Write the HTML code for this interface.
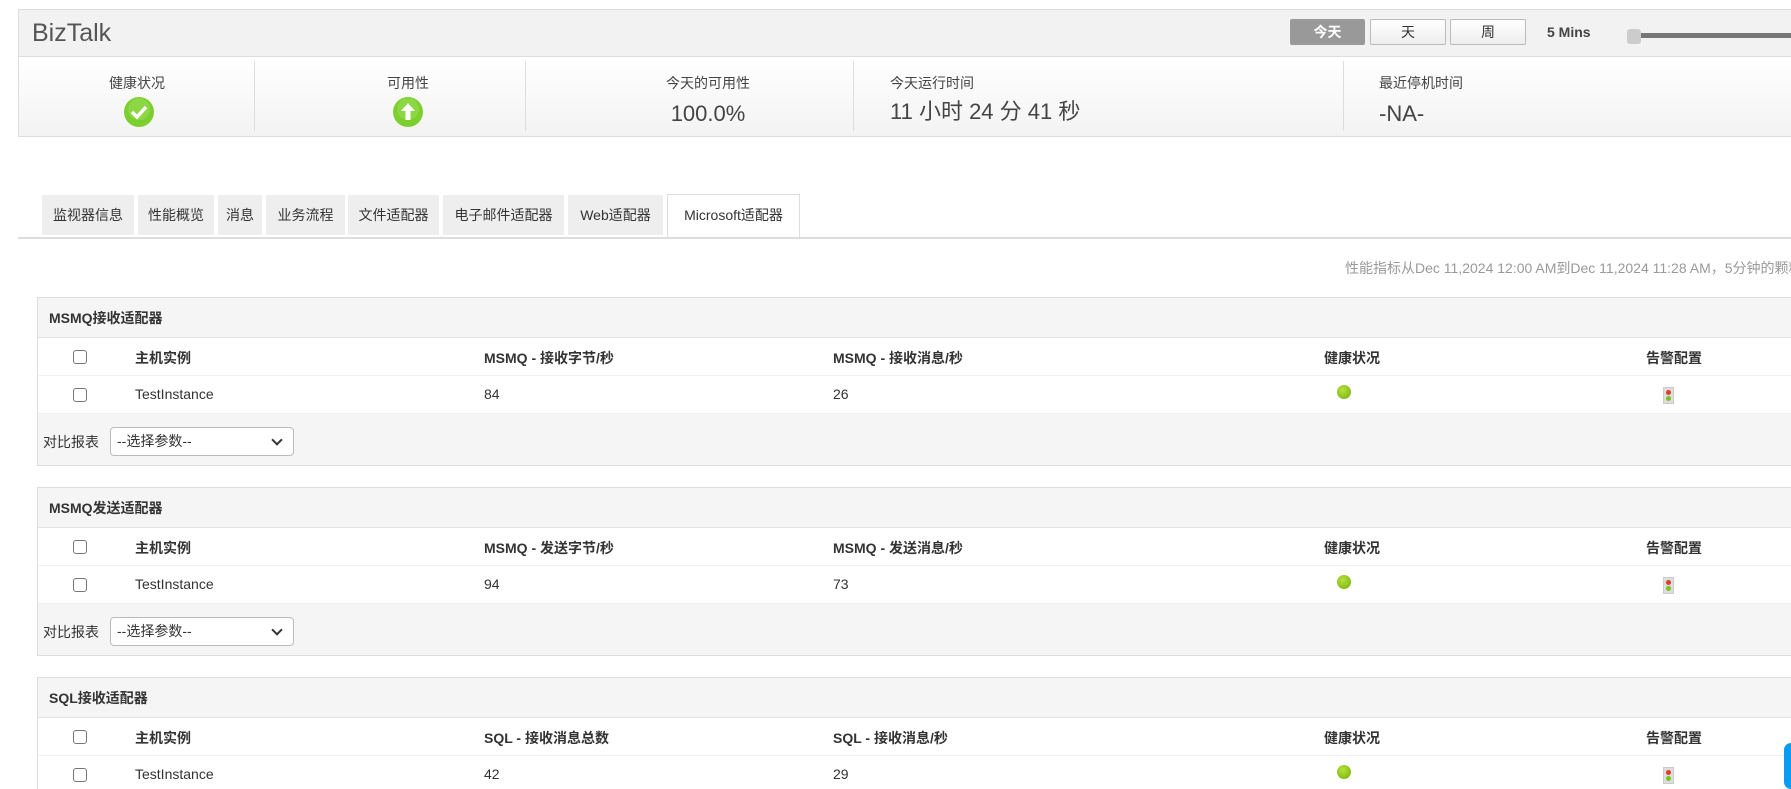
<!DOCTYPE html>
<html><head><meta charset="utf-8"><style>
*{box-sizing:border-box;margin:0;padding:0}
html,body{width:1791px;height:789px;overflow:hidden}
body{background:#fff;font-family:"Liberation Sans","Noto Sans CJK SC",sans-serif;color:#333;position:relative}
.abs{position:absolute}
.hdr{left:18px;top:9px;width:1773px;height:128px;border:1px solid #ddd;border-right:none;background:#f2f2f2}
.stats{left:19px;top:56px;width:1772px;height:80px;border-top:1px solid #ddd;background:linear-gradient(#fff,#f3f3f3)}
.div{position:absolute;top:4px;height:70px;width:1px;background:#ddd}
.lbl{position:absolute;top:17px;font-size:14px;color:#444;white-space:nowrap;line-height:18px}
.val{position:absolute;top:44px;font-size:22px;color:#444;white-space:nowrap;line-height:26px}
.btn{top:19px;height:26px;border:1px solid #bbb;background:linear-gradient(#fff,#eee);font-size:14px;text-align:center;line-height:24px;color:#333;border-radius:2px}
.tab{top:195px;height:40px;background:#eee;font-size:14px;line-height:40px;text-align:center;color:#333}
.box{left:37px;width:1754px;border:1px solid #ddd;border-right:none;background:#f5f5f5}
.box .t{height:40px;line-height:40px;padding-left:11px;font-size:14px;font-weight:bold;color:#333;border-bottom:1px solid #e3e3e3}
.row{position:relative;height:38px;background:#fff;border-bottom:1px solid #f0f0f0;font-size:14px}
.row span{position:absolute;top:10px;white-space:nowrap}
.hd span{font-weight:bold;color:#333}
.cb{position:absolute;left:35px;top:12px;width:14px;height:14px;border:1px solid #777;border-radius:3px;background:#fff}
.dot{position:absolute;width:14px;height:14px;border-radius:50%;background:radial-gradient(circle at 40% 35%,#b6e23a,#6fae0a);top:9px;left:1299px}
.tl{position:absolute;left:1625px;top:11px;width:11px;height:17px;background:#ddd;border:1px solid #ccc}
.tl:before{content:"";position:absolute;left:2px;top:2px;width:5px;height:5px;border-radius:50%;background:#e03c2c}
.tl:after{content:"";position:absolute;left:2px;top:8px;width:5px;height:5px;border-radius:50%;background:#7cc21e}
.foot{position:relative;height:51px;font-size:14px}
.foot .l{position:absolute;left:5px;top:18px}
.sel{position:absolute;left:72px;top:13px;width:184px;height:29px;border:1px solid #bbb;border-radius:4px;background:#fff;font-size:14px;line-height:27px;padding-left:6px}
.sel:after{content:"";position:absolute;right:12px;top:8px;width:6px;height:6px;border-right:2px solid #333;border-bottom:2px solid #333;transform:rotate(45deg)}
</style></head><body>
<div class="abs hdr"></div>
<div class="abs" style="left:32px;top:19px;font-size:25px;color:#555">BizTalk</div>
<div class="abs btn" style="left:1290px;width:75px;background:#999;border-color:#999;color:#fff;font-weight:bold">今天</div>
<div class="abs btn" style="left:1370px;width:76px">天</div>
<div class="abs btn" style="left:1450px;width:76px">周</div>
<div class="abs" style="left:1547px;top:24px;font-size:14px;font-weight:bold;color:#444">5 Mins</div>
<div class="abs" style="left:1630px;top:33px;width:161px;height:5px;background:#777;border-radius:2px 0 0 2px"></div>
<div class="abs" style="left:1627px;top:29px;width:14px;height:15px;background:#ccc;border-radius:3px"></div>
<div class="abs stats">
 <div class="div" style="left:235px"></div><div class="div" style="left:506px"></div><div class="div" style="left:834px"></div><div class="div" style="left:1324px"></div>
 <div class="lbl" style="left:118px;width:0;display:flex;justify-content:center"><span>健康状况</span></div>
 <div class="lbl" style="left:389px;width:0;display:flex;justify-content:center"><span>可用性</span></div>
 <div class="lbl" style="left:689px;width:0;display:flex;justify-content:center"><span>今天的可用性</span></div>
 <div class="val" style="left:689px;width:0;display:flex;justify-content:center"><span>100.0%</span></div>
 <div class="lbl" style="left:871px">今天运行时间</div>
 <div class="val" style="left:871px;top:42px">11 小时 24 分 41 秒</div>
 <div class="lbl" style="left:1360px">最近停机时间</div>
 <div class="val" style="left:1360px">-NA-</div>
</div>
<svg class="abs" style="left:123px;top:96px" width="32" height="32"><circle cx="16" cy="16" r="15" fill="#7ccf2e"/><circle cx="16" cy="13" r="11" fill="#9ee05a" opacity=".5"/><path d="M9 16l5 5 9-10" stroke="#fff" stroke-width="3.5" fill="none"/></svg>
<svg class="abs" style="left:392px;top:96px" width="32" height="32"><circle cx="16" cy="16" r="15" fill="#7ccf2e"/><circle cx="16" cy="13" r="11" fill="#9ee05a" opacity=".5"/><path d="M16 7l-7 8h4.5v9h5v-9H23z" fill="#fff"/></svg>
<div class="abs tab" style="left:42px;width:92px">监视器信息</div>
<div class="abs tab" style="left:138px;width:76px">性能概览</div>
<div class="abs tab" style="left:218px;width:44px">消息</div>
<div class="abs tab" style="left:266px;width:79px">业务流程</div>
<div class="abs tab" style="left:348px;width:91px">文件适配器</div>
<div class="abs tab" style="left:443px;width:121px">电子邮件适配器</div>
<div class="abs tab" style="left:568px;width:95px">Web适配器</div>
<div class="abs tab" style="left:667px;width:133px;background:#fff;border:1px solid #ddd;border-bottom:none;height:44px;top:194px">Microsoft适配器</div>
<div class="abs" style="left:18px;top:237px;width:1773px;height:2px;background:#ddd"></div>
<div class="abs" style="left:1345px;top:258px;font-size:14px;color:#999;white-space:nowrap">性能指标从Dec 11,2024 12:00 AM到Dec 11,2024 11:28 AM，5分钟的颗粒度</div>

<div class="abs box" style="top:297px">
 <div class="t">MSMQ接收适配器</div>
 <div class="row hd"><i class="cb"></i><span style="left:97px">主机实例</span><span style="left:446px">MSMQ - 接收字节/秒</span><span style="left:795px">MSMQ - 接收消息/秒</span><span style="left:1286px">健康状况</span><span style="left:1608px">告警配置</span></div>
 <div class="row"><i class="cb"></i><span style="left:97px">TestInstance</span><span style="left:446px">84</span><span style="left:795px">26</span><i class="dot"></i><i class="tl"></i></div>
 <div class="foot"><span class="l">对比报表</span><div class="sel">--选择参数--</div></div>
</div>
<div class="abs box" style="top:487px">
 <div class="t">MSMQ发送适配器</div>
 <div class="row hd"><i class="cb"></i><span style="left:97px">主机实例</span><span style="left:446px">MSMQ - 发送字节/秒</span><span style="left:795px">MSMQ - 发送消息/秒</span><span style="left:1286px">健康状况</span><span style="left:1608px">告警配置</span></div>
 <div class="row"><i class="cb"></i><span style="left:97px">TestInstance</span><span style="left:446px">94</span><span style="left:795px">73</span><i class="dot"></i><i class="tl"></i></div>
 <div class="foot"><span class="l">对比报表</span><div class="sel">--选择参数--</div></div>
</div>
<div class="abs box" style="top:677px;height:112px;border-bottom:none;overflow:hidden">
 <div class="t">SQL接收适配器</div>
 <div class="row hd"><i class="cb"></i><span style="left:97px">主机实例</span><span style="left:446px">SQL - 接收消息总数</span><span style="left:795px">SQL - 接收消息/秒</span><span style="left:1286px">健康状况</span><span style="left:1608px">告警配置</span></div>
 <div class="row" style="height:40px;border-bottom:none"><i class="cb"></i><span style="left:97px">TestInstance</span><span style="left:446px">42</span><span style="left:795px">29</span><i class="dot"></i><i class="tl"></i></div>
</div>
<div class="abs" style="left:1784px;top:743px;width:7px;height:46px;background:#0a9cf0;border-radius:7px 0 0 7px"></div>
</body></html>
